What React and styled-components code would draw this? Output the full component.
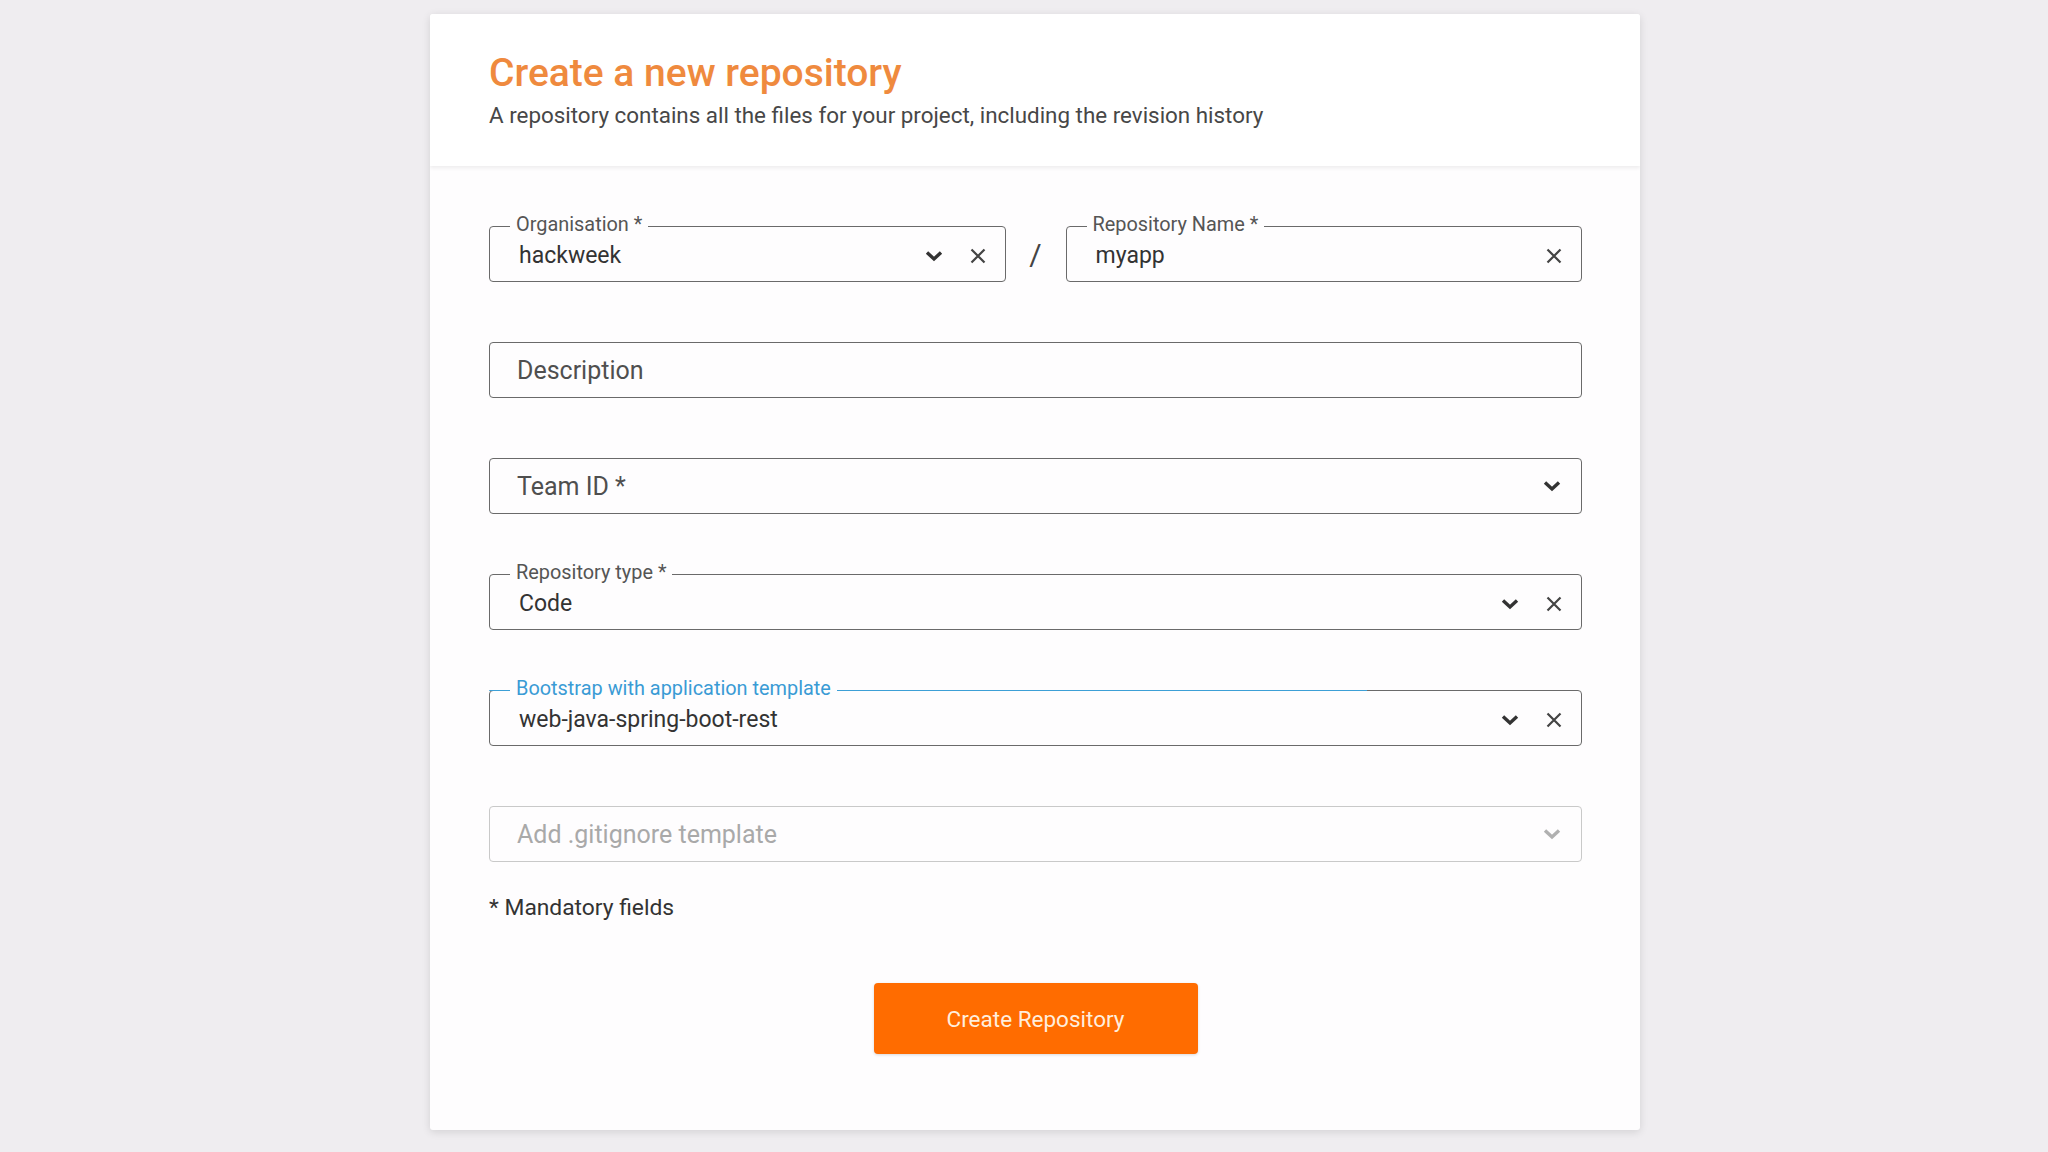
import React from 'react';
import styled, { createGlobalStyle } from 'styled-components';

const GlobalStyle = createGlobalStyle`
  body {
    margin: 0;
    background: #efedf0;
    font-family: Roboto, "Liberation Sans", sans-serif;
  }
`

const Page = styled.div`
  display: flex;
  justify-content: center;
  padding: 14px 0 21px 22px;
`

const Card = styled.div`
  width: 1210px;
  background: #fefdfe;
  border-radius: 3px;
  box-shadow: 0 2px 8px rgba(0, 0, 0, 0.12);
  overflow: hidden;
`

const Header = styled.header`
  background: #fff;
  padding: 36px 59px 38px;
  box-shadow: 0 2px 4px rgba(0, 0, 0, 0.07);
  position: relative;
`

const Title = styled.h1`
  margin: 0;
  font-size: 39px;
  line-height: 46px;
  font-weight: 500;
  color: #ef8a3e;
`

const Subtitle = styled.p`
  margin: 6px 0 0;
  font-size: 22.4px;
  line-height: 26px;
  color: #474747;
`

const Body = styled.div`
  padding: 60px 58px 76px 59px;
  display: flex;
  flex-direction: column;
`

const Fields = styled.div`
  display: flex;
  flex-direction: column;
  gap: 60px;
`

const Row = styled.div`
  display: grid;
  grid-template-columns: 1fr 60px 1fr;
  align-items: center;
`

const Slash = styled.span`
  text-align: center;
  font-size: 30px;
  color: #444;
`

const Box = styled.div`
  position: relative;
  box-sizing: border-box;
  height: 56px;
  border: 1.5px solid ${p => (p.$muted ? '#c9c9c9' : '#6a6a6a')};
  border-radius: 4px;
  display: flex;
  align-items: center;
  padding: ${p => (p.$placeholder ? 0 : 3)}px ${p => p.$pr}px 0 ${p => (p.$placeholder ? 27 : 29)}px;

  &::before {
    content: '';
    display: ${p => (p.$focus ? 'block' : 'none')};
    position: absolute;
    top: -1.5px;
    left: -1.5px;
    width: 878px;
    height: 1.5px;
    background: #3d9fd6;
    border-top-left-radius: 4px;
  }
`

const Label = styled.span`
  position: absolute;
  top: -13px;
  left: 20px;
  padding: 0 6px;
  background: #fefdfe;
  font-size: 19.9px;
  line-height: 22px;
  color: ${p => (p.$focus ? '#3a9bd5' : '#555')};
  z-index: 1;
`

const Value = styled.span`
  flex: 1;
  font-size: ${p => (p.$placeholder ? 25 : 23)}px;
  color: ${p => (p.$muted ? '#a9a9a9' : p.$placeholder ? '#4f4f4f' : '#333')};
`

const Icons = styled.div`
  display: flex;
  align-items: center;
  gap: 25px;
`

const Note = styled.p`
  margin: 33px 0 0;
  font-size: 22.8px;
  line-height: 26px;
  color: #333;
`

const Button = styled.button`
  align-self: center;
  margin-top: 62px;
  width: 324px;
  height: 71px;
  border: none;
  border-radius: 4px;
  background: #ff6c00;
  color: #ffeedd;
  font-family: Roboto, "Liberation Sans", sans-serif;
  font-size: 22.5px;
  box-shadow: 0 1px 3px rgba(0, 0, 0, 0.15);
`

const Chevron = ({ color = '#333' }) => (
  <svg width="20" height="12" viewBox="0 0 20 12">
    <path d="M3 2.5 L10 9 L17 2.5" fill="none" stroke={color} strokeWidth="3.4" strokeLinejoin="miter" />
  </svg>
)

const Close = () => (
  <svg width="18" height="18" viewBox="0 0 18 18">
    <path d="M2.5 2.5 L15.5 15.5 M15.5 2.5 L2.5 15.5" stroke="#444" strokeWidth="2.2" />
  </svg>
)

function Field ({ label, value, placeholder, chevron, clear, focus, muted }) {
  const pr = chevron && !clear ? 19 : 18;
  return (
    <Box $focus={focus} $muted={muted} $placeholder={!!placeholder} $pr={pr}>
      {label && <Label $focus={focus}>{label}</Label>}
      <Value $placeholder={!!placeholder} $muted={muted}>{value || placeholder}</Value>
      <Icons>
        {chevron && <Chevron color={muted ? '#b0b0b0' : '#333'} />}
        {clear && <Close />}
      </Icons>
    </Box>
  )
}

export default function App () {
  return (
    <Page>
      <GlobalStyle />
      <Card>
        <Header>
          <Title>Create a new repository</Title>
          <Subtitle>A repository contains all the files for your project, including the revision history</Subtitle>
        </Header>
        <Body>
          <Fields>
            <Row>
              <Field label="Organisation *" value="hackweek" chevron clear />
              <Slash>/</Slash>
              <Field label="Repository Name *" value="myapp" clear />
            </Row>
            <Field placeholder="Description" />
            <Field placeholder="Team ID *" chevron />
            <Field label="Repository type *" value="Code" chevron clear />
            <Field label="Bootstrap with application template" value="web-java-spring-boot-rest" chevron clear focus />
            <Field placeholder="Add .gitignore template" chevron muted />
          </Fields>
          <Note>* Mandatory fields</Note>
          <Button>Create Repository</Button>
        </Body>
      </Card>
    </Page>
  )
}
